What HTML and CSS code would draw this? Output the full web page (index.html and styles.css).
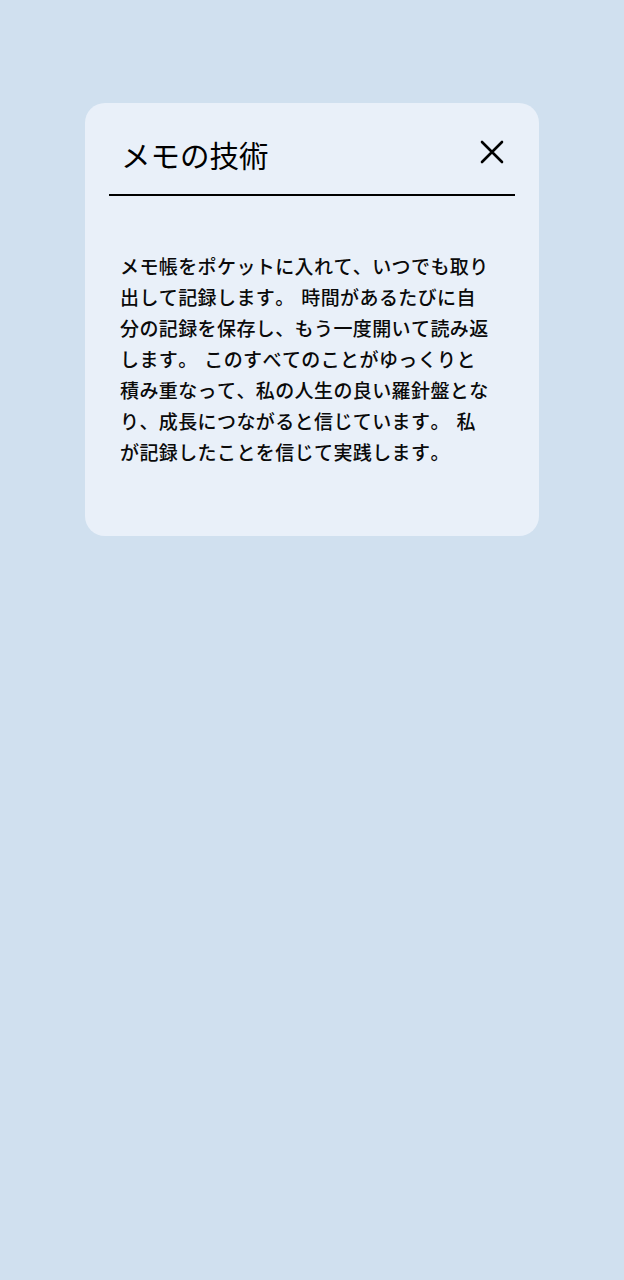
FILE: index.html
```html
<!DOCTYPE html>
<html lang="ja">
<head>
<meta charset="utf-8">
<link rel="stylesheet" href="styles.css">
</head>
<body>
<div class="page">
  <div class="card">
    <div class="header">
      <h1 class="title">メモの技術</h1>
      <button class="close" aria-label="閉じる">
        <svg viewBox="0 0 24 24" width="24" height="24"><path d="M2 2 L22 22 M22 2 L2 22" stroke="#000" stroke-width="2.6" stroke-linecap="round" fill="none"/></svg>
      </button>
    </div>
    <p class="body-text">メモ帳をポケットに入れて、いつでも取り出して記録します。 時間があるたびに自分の記録を保存し、もう一度開いて読み返します。 このすべてのことがゆっくりと積み重なって、私の人生の良い羅針盤となり、成長につながると信じています。 私が記録したことを信じて実践します。</p>
  </div>
</div>
</body>
</html>
```
FILE: styles.css
```css
html, body {
  margin: 0;
  padding: 0;
}
body {
  background: #d0e0ef;
  font-family: "Noto Sans CJK JP", "Noto Sans", sans-serif;
  color: #0a0a0a;
}
.page {
  width: 624px;
  height: 1280px;
  padding-top: 103px;
  box-sizing: border-box;
}
.card {
  margin-left: 85px;
  width: 454px;
  height: 433px;
  box-sizing: border-box;
  background: #e9f0f9;
  border-radius: 20px;
  padding: 0 24px;
}
.header {
  display: flex;
  align-items: center;
  justify-content: space-between;
  height: 93px;
  border-bottom: 2px solid #000;
  padding: 0 11px 0 12px;
  box-sizing: border-box;
}
.title {
  margin: 0;
  font-size: 29.5px;
  font-weight: 400;
  line-height: 1;
  padding-top: 12px;
  color: #000;
}
.close {
  border: 0;
  background: none;
  padding: 0;
  width: 24px;
  height: 24px;
  margin-top: 6px;
  cursor: pointer;
}
.close svg { display: block; }
.body-text {
  margin: 0;
  padding: 54px 0 0 11px;
  width: 371px;
  font-size: 19px;
  font-weight: 500;
  letter-spacing: 0.4px;
  word-spacing: 2px;
  line-height: 31px;
  font-kerning: none;
  text-spacing-trim: space-all;
}
```
